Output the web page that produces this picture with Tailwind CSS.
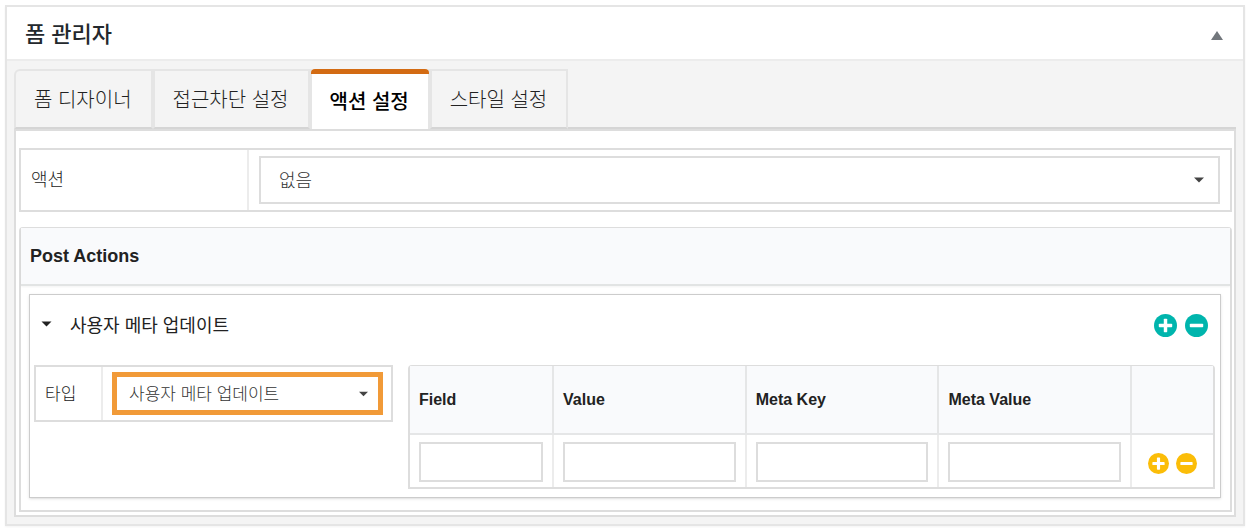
<!DOCTYPE html>
<html lang="ko">
<head>
<meta charset="utf-8">
<meta name="viewport" content="width=device-width, initial-scale=1">
<title>폼 관리자</title>
<script src="https://cdn.jsdelivr.net/npm/@tailwindcss/browser@4"></script>
</head>
<body class="bg-white p-[5px] pr-2 font-['Liberation_Sans','Noto_Sans_CJK_KR',sans-serif] text-[#222]">
<svg class="hidden">
  <symbol id="plus" viewBox="0 0 24 24"><circle cx="12" cy="12" r="12" fill="currentColor"/><rect x="5" y="10.2" width="14" height="3.6" rx="0.8" fill="#fff"/><rect x="10.2" y="5" width="3.6" height="14" rx="0.8" fill="#fff"/></symbol>
  <symbol id="minus" viewBox="0 0 24 24"><circle cx="12" cy="12" r="12" fill="currentColor"/><rect x="5" y="10.2" width="14" height="3.6" rx="0.8" fill="#fff"/></symbol>
  <symbol id="caret" viewBox="0 0 10 6"><path d="M0 0.5h10L5 5.5z" fill="currentColor"/></symbol>
</svg>

<section class="border-2 border-[#e5e5e5] bg-[#f4f4f4] shadow-xs">
  <header class="flex h-[54px] items-center justify-between border-b-2 border-[#ececec] bg-white pr-5 pl-[18px]">
    <h1 class="pt-1 text-[22px] leading-8 font-medium text-[#23282d]">폼 관리자</h1>
    <button type="button" aria-label="접기" class="text-[#72777c]"><svg class="mt-1 h-[9px] w-3" viewBox="0 0 12 9"><path d="M6 0l6 9H0z" fill="currentColor"/></svg></button>
  </header>

  <div class="px-[7px] pt-2 pb-[7px]">
    <nav class="flex items-stretch text-xl leading-7 font-light text-[#222]">
      <a href="#designer" class="flex h-[60px] items-center rounded-tl-md border-2 border-[#e5e5e5] border-b-[#d5d5d5] pt-0.5 pr-[19px] pl-[18px]">폼 디자이너</a>
      <a href="#access" class="flex h-[60px] items-center border-2 border-[#e5e5e5] border-b-[#d5d5d5] pt-0.5 pr-[19px] pl-[18px]">접근차단 설정</a>
      <a href="#action" aria-current="page" class="flex h-[60px] flex-col border-x-2 border-[#e5e5e5] bg-[#f4f4f4] font-medium text-black">
        <span class="-mx-px h-[5px] rounded-t-sm bg-[#d36b13]"></span>
        <span class="flex grow items-center bg-white pr-[19px] pl-[18px]">액션 설정</span>
      </a>
      <a href="#style" class="flex h-[60px] items-center border-2 border-[#e5e5e5] border-b-[#d5d5d5] pt-0.5 pr-[19px] pl-[18px]">스타일 설정</a>
      <span class="grow border-b-2 border-[#d5d5d5]"></span>
    </nav>

    <div class="border-2 border-[#ddd] bg-white pt-[17px] pr-[2px] pb-[3px] pl-[3px]">
      <div class="flex border-2 border-[#ddd]">
        <label for="action" class="flex w-[228px] shrink-0 items-center border-r-2 border-[#ececec] px-[10px] text-lg font-light">액션</label>
        <div class="grid grow items-center px-[10px] py-[6px]">
          <select id="action" class="col-start-1 row-start-1 h-12 w-full appearance-none border-2 border-[#ddd] bg-white px-[18px] pt-0.5 text-lg font-light text-[#333]"><option>없음</option></select>
          <svg class="pointer-events-none col-start-1 row-start-1 mr-4 h-[6px] w-[10px] justify-self-end text-[#444]"><use href="#caret"/></svg>
        </div>
      </div>

      <section class="mt-[15px] rounded-t-sm border-2 border-t border-[#ddd]">
        <h2 class="flex h-[58px] items-center border-b-2 border-[#e2e4e4] bg-[#f9fafc] px-[9px] text-lg font-bold shadow-xs">Post Actions</h2>

        <div class="mt-2 mr-[9px] mb-3 ml-2 border border-[#ccc] pr-[5px] pb-2 pl-1 shadow-sm">
          <div class="flex h-[62px] items-center">
            <button type="button" aria-label="펼치기" class="ml-[7px]"><svg class="mb-1 h-[6px] w-[11px]"><use href="#caret"/></svg></button>
            <h3 class="ml-[18px] grow text-lg font-normal">사용자 메타 업데이트</h3>
            <div class="mr-[7px] flex gap-2 pb-0.5 text-[#00b5ad]">
              <button type="button" aria-label="액션 추가"><svg class="h-[23px] w-[23px]"><use href="#plus"/></svg></button>
              <button type="button" aria-label="액션 삭제"><svg class="h-[23px] w-[23px]"><use href="#minus"/></svg></button>
            </div>
          </div>

          <div class="mt-2 flex items-start gap-[15px]">
            <div class="flex w-[359px] shrink-0 border-2 border-[#ddd]">
              <label for="type" class="flex w-[67px] shrink-0 items-center border-r-2 border-[#ececec] px-[9px] pt-0.5 text-[17px] font-light">타입</label>
              <div class="grid grow items-center px-2 py-[5px] pl-[9px]">
                <select id="type" class="col-start-1 row-start-1 h-[43px] w-full appearance-none border-5 border-[#f19a38] bg-white px-3 pt-0.5 text-[17px] font-light text-[#333]"><option>사용자 메타 업데이트</option></select>
                <svg class="pointer-events-none col-start-1 row-start-1 mt-px mr-[15px] h-[6px] w-[9px] justify-self-end text-[#444]"><use href="#caret"/></svg>
              </div>
            </div>

            <table class="grow table-fixed border-separate border-spacing-0 rounded-t-sm border-2 border-t border-[#ddd]">
              <colgroup><col class="w-[144px]"><col class="w-[24%]"><col class="w-[24%]"><col class="w-[24%]"><col></colgroup>
              <thead class="bg-[#f9fafc] text-left text-base">
                <tr class="h-[69px]">
                  <th scope="col" class="border-r-2 border-b-2 border-[#e5e6e7] px-[9px]"><span id="c1">Field</span></th>
                  <th scope="col" class="border-r-2 border-b-2 border-[#e5e6e7] px-[9px]"><span id="c2">Value</span></th>
                  <th scope="col" class="border-r-2 border-b-2 border-[#e5e6e7] px-[9px]"><span id="c3">Meta Key</span></th>
                  <th scope="col" class="border-r-2 border-b-2 border-[#e5e6e7] px-[9px]"><span id="c4">Meta Value</span></th>
                  <td class="border-b-2 border-[#e5e6e7]"></td>
                </tr>
              </thead>
              <tbody>
                <tr class="h-[52px]">
                  <td class="border-r-2 border-[#ececec] px-[9px] pt-0.5"><input type="text" aria-labelledby="c1" class="block h-10 w-full border-2 border-[#ddd] px-2"></td>
                  <td class="border-r-2 border-[#ececec] px-[9px] pt-0.5"><input type="text" aria-labelledby="c2" class="block h-10 w-full border-2 border-[#ddd] px-2"></td>
                  <td class="border-r-2 border-[#ececec] px-[9px] pt-0.5"><input type="text" aria-labelledby="c3" class="block h-10 w-full border-2 border-[#ddd] px-2"></td>
                  <td class="border-r-2 border-[#ececec] px-[9px] pt-0.5"><input type="text" aria-labelledby="c4" class="block h-10 w-full border-2 border-[#ddd] px-2"></td>
                  <td>
                    <div class="flex justify-center gap-[7px] pt-1 text-[#fbbd08]">
                      <button type="button" aria-label="행 추가"><svg class="h-[21px] w-[21px]"><use href="#plus"/></svg></button>
                      <button type="button" aria-label="행 삭제"><svg class="h-[21px] w-[21px]"><use href="#minus"/></svg></button>
                    </div>
                  </td>
                </tr>
              </tbody>
            </table>
          </div>
        </div>
      </section>
    </div>
  </div>
</section>
</body>
</html>
